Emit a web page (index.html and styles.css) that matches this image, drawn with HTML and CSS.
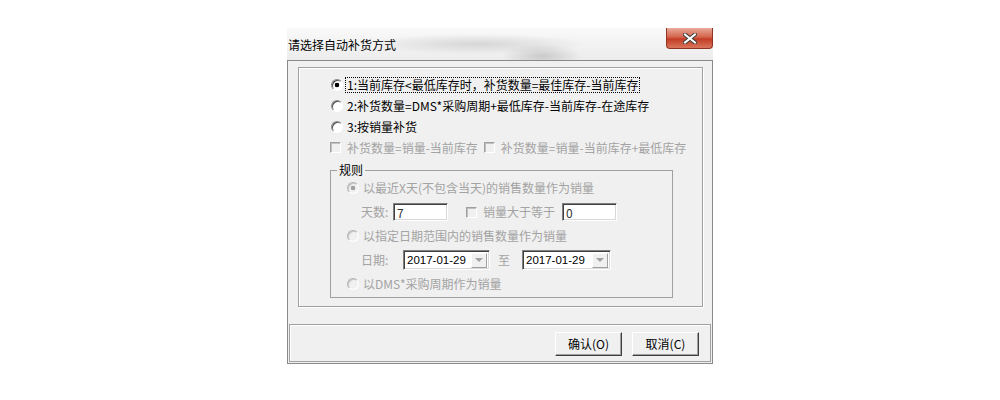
FILE: index.html
```html
<!DOCTYPE html>
<html lang="zh-CN">
<head>
    <meta charset="UTF-8">
    <title>请选择自动补货方式</title>
    <link rel="stylesheet" href="styles.css">
</head>
<body>
<div class="dialog">
    <div class="titlebar">
        <span class="title">请选择自动补货方式</span>
        <span class="close">
            <svg width="14" height="11" viewBox="0 0 14 11">
                <path d="M2 1.5 L12 9.5 M12 1.5 L2 9.5" stroke="#3b3b3b" stroke-width="4" stroke-linecap="square"/>
                <path d="M2 1.5 L12 9.5 M12 1.5 L2 9.5" stroke="#fff" stroke-width="2" stroke-linecap="square"/>
            </svg>
        </span>
    </div>
    <div class="client">
        <div class="main">
            <div class="group">
                <div class="row">
                    <span class="radio checked"></span>
                    <span class="label focus">1:当前库存&lt;最低库存时，补货数量=最佳库存-当前库存</span>
                </div>
                <div class="row">
                    <span class="radio"></span>
                    <span class="label">2:补货数量=DMS*采购周期+最低库存-当前库存-在途库存</span>
                </div>
                <div class="row">
                    <span class="radio"></span>
                    <span class="label">3:按销量补货</span>
                </div>
                <div class="row disabled checks">
                    <span class="check"></span>
                    <span class="label">补货数量=销量-当前库存</span>
                    <span class="check second"></span>
                    <span class="label">补货数量=销量-当前库存+最低库存</span>
                </div>

                <fieldset class="rules">
                    <legend>规则</legend>
                    <div class="rrow">
                        <span class="radio checked off"></span>
                        <span class="label">以最近X天(不包含当天)的销售数量作为销量</span>
                    </div>
                    <div class="rrow sub">
                        <span class="days">天数:</span>
                        <input class="field" type="text" value="7" readonly>
                        <span class="check gt"></span>
                        <span class="gt-label">销量大于等于</span>
                        <input class="field" type="text" value="0" readonly>
                    </div>
                    <div class="rrow">
                        <span class="radio off"></span>
                        <span class="label">以指定日期范围内的销售数量作为销量</span>
                    </div>
                    <div class="rrow sub">
                        <span class="date-label">日期:</span>
                        <span class="combo"><span class="value">2017-01-29</span><span class="drop"></span></span>
                        <span class="to">至</span>
                        <span class="combo wide"><span class="value">2017-01-29</span><span class="drop"></span></span>
                    </div>
                    <div class="rrow">
                        <span class="radio off"></span>
                        <span class="label">以DMS*采购周期作为销量</span>
                    </div>
                </fieldset>
            </div>
        </div>
        <div class="buttons">
            <button class="btn">确认(O)</button>
            <button class="btn">取消(C)</button>
        </div>
    </div>
</div>
</body>
</html>
```

FILE: styles.css
```css
* {
    margin: 0;
    padding: 0;
    box-sizing: border-box;
}

body {
    background-color: #fff;
    font: 400 12px/14px "Noto Sans CJK SC", "Liberation Sans", sans-serif;
    color: #000;
}

.dialog {
    width: 426px;
    margin: 28px 0 0 287px;
}

/* 标题栏 */
.titlebar {
    height: 32px;
    display: flex;
    justify-content: space-between;
    align-items: flex-start;
    background:
        radial-gradient(ellipse 110px 10px at 190px 16px, rgba(140, 140, 140, .28), transparent),
        radial-gradient(ellipse 40px 12px at 255px 28px, rgba(120, 120, 120, .3), transparent),
        linear-gradient(#f9f9f9, #ececec);
}

.title {
    padding: 10px 0 0 1px;
    font-size: 12px;
}

.close {
    width: 47px;
    height: 21px;
    display: flex;
    align-items: center;
    justify-content: center;
    border: 1px solid #8e3424;
    border-top: none;
    border-radius: 0 0 4px 4px;
    background: linear-gradient(#e9aa9b, #d4644c 45%, #c33c24 55%, #d9765c);
}

/* 主体 */
.client {
    border: 1px solid #8a8a8a;
    background-color: #f0f0f0;
}

.main {
    padding: 6px 9px 0 10px;
}

.group {
    height: 240px;
    border: 1px solid #a0a0a0;
    box-shadow: inset 1px 1px 0 #fff, 1px 1px 0 #fff;
    padding: 6px 0 0 32px;
}

.row {
    height: 21px;
    display: flex;
    align-items: center;
    white-space: nowrap;
}

.radio {
    flex: none;
    width: 12px;
    height: 12px;
    margin-right: 4px;
    border-radius: 50%;
    border: 1px solid;
    border-color: #8a8a8a #fff #fff #8a8a8a;
    box-shadow: inset 1px 1px 0 #505050;
    background-color: #fff;
}

.radio.checked {
    background: radial-gradient(circle, #000 0 2px, #fff 2.6px);
}

.radio.off {
    background-color: #f0f0f0;
    border-color: #b4b4b4 #fff #fff #b4b4b4;
    box-shadow: inset 1px 1px 0 #c8c8c8;
}

.radio.checked.off {
    background: radial-gradient(circle, #a0a0a0 0 2px, #f0f0f0 2.6px);
}

.focus {
    outline: 1px dotted #000;
    outline-offset: 0;
    padding: 0 1px;
    margin-left: -1px;
}

.check {
    flex: none;
    width: 11px;
    height: 11px;
    border: 1px solid;
    border-color: #a0a0a0 #fff #fff #a0a0a0;
    box-shadow: inset 1px 1px 0 #c0c0c0;
    background-color: #f0f0f0;
}

.checks .check {
    margin: 0 6px 0 -1px;
}

.checks .second {
    margin-left: 6px;
}

.disabled,
.rules .label,
.days,
.gt-label,
.date-label,
.to {
    color: #a3a3a3;
}

/* 规则 */
.rules {
    width: 343px;
    margin: 6px 0 0 -1px;
    border: 1px solid #a0a0a0;
    padding: 0 0 1px;
    min-inline-size: 0;
}

.rules legend {
    margin-left: 6px;
    padding: 0 2px;
    line-height: 12px;
    color: #000;
}

.rrow {
    height: 24px;
    display: flex;
    align-items: center;
    padding-left: 16px;
    white-space: nowrap;
}

.rrow.sub {
    padding-left: 30px;
}

.days {
    width: 32px;
}

.field {
    width: 55px;
    height: 18px;
    border: 1px solid;
    border-color: #808080 #fff #fff #808080;
    box-shadow: inset 1px 1px 0 #404040, inset -1px -1px 0 #d8d8d8;
    background-color: #fff;
    padding: 0 3px;
    font: inherit;
    color: #333;
    outline: none;
}

.check.gt {
    margin: 0 6px 0 18px;
}

.gt-label {
    width: 79px;
}

.date-label {
    width: 42px;
}

.combo {
    width: 87px;
    height: 20px;
    display: flex;
    align-items: center;
    justify-content: space-between;
    border: 1px solid;
    border-color: #808080 #fff #fff #808080;
    box-shadow: inset 1px 1px 0 #404040, inset -1px -1px 0 #d8d8d8;
    background-color: #fff;
    padding: 2px 2px 2px 3px;
}

.combo.wide {
    width: 89px;
    margin-left: 12px;
}

.value {
    color: #000;
    font-family: "Liberation Sans", sans-serif;
    font-size: 11.5px;
}

.drop {
    width: 16px;
    height: 15px;
    display: flex;
    align-items: center;
    justify-content: center;
    border: 1px solid;
    border-color: #fff #a0a0a0 #a0a0a0 #fff;
    background-color: #f0f0f0;
}

.drop::after {
    content: "";
    border: 4px solid transparent;
    border-top: 4px solid #a0a0a0;
    border-bottom: none;
}

.to {
    margin-left: 8px;
}

/* 按钮 */
.buttons {
    height: 38px;
    margin: 17px 1px 1px;
    border: 1px solid #a0a0a0;
    box-shadow: inset 1px 1px 0 #fff;
    display: flex;
    justify-content: flex-end;
    align-items: flex-start;
    gap: 10px;
    padding: 7px 11px 0 0;
}

.btn {
    width: 67px;
    height: 24px;
    border: 1px solid;
    border-color: #fff #404040 #404040 #fff;
    box-shadow: inset -1px -1px 0 #a0a0a0;
    background-color: #f0f0f0;
    font: inherit;
    color: #000;
}
```
